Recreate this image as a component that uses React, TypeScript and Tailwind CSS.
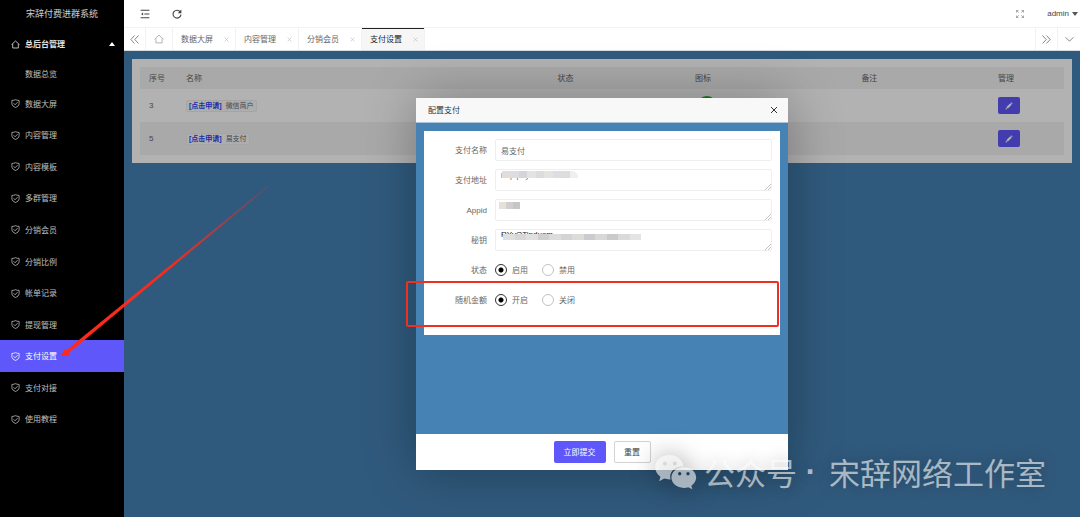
import { useState } from 'react'
import type { ReactNode } from 'react'

/* ─── Data ────────────────────────────────────────────────────────────────── */

const MENU = [
  '数据大屏', '内容管理', '内容模板', '多群管理', '分销会员', '分销比例',
  '帐单记录', '提现管理', '支付设置', '支付对接', '使用教程',
]

const TABS = ['数据大屏', '内容管理', '分销会员', '支付设置']

const ROWS = [
  { id: 3, name: '微信商户' },
  { id: 5, name: '易支付' },
]

const LATIN = "font-['Liberation_Sans','Noto_Sans_CJK_SC',sans-serif]"

/* ─── Icons ───────────────────────────────────────────────────────────────── */

function Icon({ className, children }: { className: string; children: ReactNode }) {
  return (
    <svg
      viewBox="0 0 16 16"
      className={`shrink-0 ${className}`}
      fill="none"
      stroke="currentColor"
      strokeWidth="1.4"
      aria-hidden="true"
    >
      {children}
    </svg>
  )
}

const HomeIcon = ({ className }: { className: string }) => (
  <Icon className={className}>
    <path d="M1 8.2 8 1.8l7 6.4M3 7v7.2h10V7" />
  </Icon>
)

const ShieldIcon = () => (
  <Icon className="size-[9px]">
    <path d="M8 1.2c2.2 1 4.4 1.4 6.4 1.4V8c0 3.4-2.6 5.6-6.4 7C4.2 13.6 1.6 11.4 1.6 8V2.6C3.6 2.6 5.8 2.2 8 1.2z" />
    <path d="m4.6 7.6 2.6 2.6 4.6-4.6" />
  </Icon>
)

const CloseIcon = ({ className }: { className: string }) => (
  <Icon className={className}>
    <path d="m2 2 12 12M14 2 2 14" strokeWidth="2" />
  </Icon>
)

const PencilIcon = () => (
  <svg viewBox="0 0 16 16" className="size-2" fill="currentColor" aria-hidden="true">
    <path d="m1 15 1.2-4 2.8 2.8zM3 10.200l7.600-7.600 2.800 2.800-7.600 7.600zM11.400 1.800l1.200-1.200 2.800 2.800-1.200 1.200z" />
  </svg>
)

/* ─── Sidebar ─────────────────────────────────────────────────────────────── */

function Sidebar() {
  return (
    <aside className="w-[124px] shrink-0 bg-black text-white/75">
      <h1 className="flex h-7 items-center justify-center text-[9px] text-white/80">宋辞付费进群系统</h1>
      <nav>
        <a href="#admin" className="flex h-8 items-center gap-[5px] px-[11px] font-bold text-white/90">
          <HomeIcon className="size-[9px]" />
          <span className="flex-1">总后台管理</span>
          <svg viewBox="0 0 6 4" className="mr-[-2px] h-1 w-1.5" fill="white" aria-hidden="true">
            <path d="M3 0l3 4H0z" />
          </svg>
        </a>
        <a href="#overview" className="flex h-7 items-center pl-[25px]">数据总览</a>
        <ul className="flex h-[347px] flex-col">
          {MENU.map((m) => (
            <li key={m} className="flex-1">
              <a
                href={`#${m}`}
                className={`flex h-full items-center gap-[5px] px-[11px] ${m === '支付设置' ? 'bg-[#5f57fa] text-white' : ''}`}
              >
                <ShieldIcon />
                {m}
              </a>
            </li>
          ))}
        </ul>
      </nav>
    </aside>
  )
}

/* ─── Top bar and tabs ────────────────────────────────────────────────────── */

function TopBar() {
  return (
    <header className="bg-white text-[#444]">
      <div className="flex h-[27px] items-center pl-4">
        <button aria-label="收起菜单">
          <Icon className="size-[10px]">
            <path d="M1 2h14M7 8h8M1 14h14" strokeWidth="1.8" />
            <path d="M5 5.500v5L1.800 8z" fill="currentColor" stroke="none" />
          </Icon>
        </button>
        <button aria-label="刷新" className="ml-[22px]">
          <Icon className="size-[10px]">
            <path d="M13.200 4.600A6.300 6.300 0 1 0 14.300 9" strokeWidth="1.8" />
            <path d="M15 .8V6.600H9.200z" fill="currentColor" stroke="none" />
          </Icon>
        </button>
        <button aria-label="全屏" className="ml-auto text-[#888]">
          <Icon className="size-2">
            <path d="M1 5V1h4M1 1l4.500 4.500M11 1h4v4M15 1l-4.500 4.500M15 11v4h-4M15 15l-4.500-4.500M5 15H1v-4M1 15l4.500-4.500" />
          </Icon>
        </button>
        <button className={`ml-[23px] mr-0.5 flex items-center gap-[3px] ${LATIN}`}>
          admin
          <svg viewBox="0 0 6 4" className="h-1 w-1.5" fill="#555" aria-hidden="true">
            <path d="M0 0h6L3 4z" />
          </svg>
        </button>
      </div>
      <div className="flex h-6 border-y border-t-[#f2f2f2] border-b-[#d5dbe0] text-[#666]">
        <button aria-label="向左滚动" className="flex w-[22px] items-center justify-center border-r border-[#f2f2f2]">
          <Icon className="size-[9px]">
            <path d="M8 1 1.500 8 8 15M15 1 8.500 8l6.500 7" />
          </Icon>
        </button>
        <a href="#home" aria-label="首页" className="flex w-[27px] items-center justify-center border-r border-[#f2f2f2] text-[#aaa]">
          <HomeIcon className="size-[10px]" />
        </a>
        {TABS.map((t) => (
          <div
            key={t}
            className={`flex w-[63px] items-center justify-between border-r border-[#f2f2f2] pl-2 pr-1.5 ${
              t === '支付设置' ? 'bg-[#f6f6f6] text-[#222] shadow-[inset_0_1px_0_#222]' : ''
            }`}
          >
            <a href={`#tab-${t}`}>{t}</a>
            <button aria-label={`关闭${t}`} className="text-[#bbb]">
              <CloseIcon className="size-[5px]" />
            </button>
          </div>
        ))}
        <button aria-label="向右滚动" className="ml-auto flex w-[23px] items-center justify-center border-x border-[#f2f2f2]">
          <Icon className="size-[9px]">
            <path d="M1 1l6.500 7L1 15M8 1l6.500 7L8 15" />
          </Icon>
        </button>
        <button aria-label="更多" className="flex w-[22px] items-center justify-center">
          <Icon className="size-[9px]">
            <path d="m1 4 7 7 7-7" />
          </Icon>
        </button>
      </div>
    </header>
  )
}

/* ─── Payment table ───────────────────────────────────────────────────────── */

function PaymentTable() {
  return (
    <div className="bg-white p-2 text-[#666]">
      <table className="w-full table-fixed text-left">
        <thead>
          <tr className="h-[22px] bg-[#f2f2f2]">
            <th className="w-[4%] pl-[9px] font-normal">序号</th>
            <th className="w-[40.2%] pl-[9px] font-normal">名称</th>
            <th className="w-[14.9%] pl-[9px] font-normal">状态</th>
            <th className="w-[18%] pl-[9px] font-normal">图标</th>
            <th className="w-[14.9%] pl-[9px] font-normal">备注</th>
            <th className="pl-2 font-normal">管理</th>
          </tr>
        </thead>
        <tbody>
          {ROWS.map((r) => (
            <tr key={r.id} className="h-[33px] even:bg-[#f2f2f2]">
              <td className={`pl-[9px] ${LATIN}`}>{r.id}</td>
              <td className="pl-[9px]">
                <span className={`flex h-3 w-fit items-center gap-1 rounded-xs border border-[#ececec] bg-[#fafafa] px-0.5 text-[7px] ${LATIN}`}>
                  <a href="#apply" className="font-bold text-[#2a3ef0]">[点击申请]</a>
                  {r.name}
                </span>
              </td>
              <td className="pl-[9px]">启用</td>
              <td className="pl-[11px]">
                <span className="block size-5 rounded-full bg-[#1db31d]" />
              </td>
              <td />
              <td className="pl-2">
                <button aria-label="编辑" className="flex h-[17px] w-[22px] items-center justify-center rounded-xs bg-[#5f57fa] text-white">
                  <PencilIcon />
                </button>
              </td>
            </tr>
          ))}
        </tbody>
      </table>
    </div>
  )
}

/* ─── Dialog form ─────────────────────────────────────────────────────────── */

const FIELD = 'block h-[22px] w-full resize-none rounded-xs border border-[#eee] bg-white px-[5px] outline-none'

function FormRow({ id, label, children }: { id: string; label: ReactNode; children: ReactNode }) {
  return (
    <div className="mb-2 flex h-[22px] items-center gap-2">
      <label htmlFor={id} className="w-[55px] text-right">{label}</label>
      <div className="relative flex-1">{children}</div>
    </div>
  )
}

const Grip = () => (
  <svg viewBox="0 0 6 6" className="pointer-events-none absolute bottom-px right-px size-1.5" stroke="#999" strokeWidth=".6" aria-hidden="true">
    <path d="M0 6 6 0M3 6l3-3" />
  </svg>
)

function Mosaic({ className, colors }: { className: string; colors: string[] }) {
  return (
    <div className={`absolute flex overflow-hidden ${className}`}>
      {colors.map((c, i) => (
        <span key={i} className="h-full flex-1" style={{ backgroundColor: c }} />
      ))}
    </div>
  )
}

function RadioPair({ id, options }: { id: string; options: string[] }) {
  const [value, setValue] = useState(options[0])
  return (
    <div className="flex gap-[14px]">
      {options.map((o, i) => (
        <label key={o} className="flex items-center gap-[5px]">
          <input
            id={i === 0 ? id : undefined}
            type="radio"
            name={id}
            checked={value === o}
            onChange={() => setValue(o)}
            className="size-3 appearance-none rounded-full border border-[#c2c2c2] bg-white checked:border-[#333] checked:bg-[radial-gradient(circle,#000_2px,#fff_3px)]"
          />
          {o}
        </label>
      ))}
    </div>
  )
}

function PayDialog() {
  return (
    <div role="dialog" aria-label="配置支付" className="relative flex w-[372px] flex-col text-[#666] shadow-[1px_1px_50px_rgba(0,0,0,0.3)]">
      <div className="flex h-6 items-center justify-between bg-[#f8f8f8] pl-3 pr-[10px] text-[#333]">
        <h2>配置支付</h2>
        <button aria-label="关闭">
          <CloseIcon className="size-2" />
        </button>
      </div>
      <div className="min-h-[312px] border-t border-[#a9c4da] bg-[#4682b4] p-2">
        <form id="pay-form" className="bg-white px-2 pb-4 pt-2">
          <FormRow id="name" label="支付名称">
            <input id="name" className={FIELD} defaultValue="易支付" />
          </FormRow>
          <FormRow id="url" label="支付地址">
            <textarea id="url" className={`${FIELD} ${LATIN}`} defaultValue="http:pay." />
            <Mosaic
              className="left-[7px] top-[2px] h-[7px] w-[76px] rounded-tr-md"
              colors={['#e2dcdc', '#dcdde0', '#d3d5d8', '#e5e3e2', '#dcdcdc', '#e3e3e1', '#d9dfe2', '#dedcdf', '#efefef']}
            />
            <Grip />
          </FormRow>
          <FormRow id="appid" label={<span className={LATIN}>Appid</span>}>
            <textarea id="appid" className={FIELD} />
            <Mosaic className="left-1 top-[3px] h-[7px] w-[21px]" colors={['#e6e0db', '#cfcfd1', '#c4c6c9']} />
            <Grip />
          </FormRow>
          <FormRow id="secret" label="秘钥">
            <textarea id="secret" className={`${FIELD} ${LATIN} leading-[10px] text-[#222]`} defaultValue="RYyOTinduom" />
            <Mosaic
              className="left-2 top-[5px] h-1.5 w-[138px]"
              colors={['#dfdfdf', '#d7d7d9', '#e1e0df', '#cfcfd1', '#dcdcdc', '#d2d4d6', '#dedcda', '#cbcccf', '#d8d8d8', '#c9cacc', '#dadada', '#e4e4e4']}
            />
            <Grip />
          </FormRow>
          <FormRow id="status" label="状态">
            <RadioPair id="status" options={['启用', '禁用']} />
          </FormRow>
          <FormRow id="random" label="随机金额">
            <RadioPair id="random" options={['开启', '关闭']} />
          </FormRow>
        </form>
      </div>
      <div className="flex h-9 items-center justify-center gap-2 bg-white">
        <button type="submit" form="pay-form" className="h-[22px] w-[52px] rounded-xs bg-[#5f57fa] text-white">立即提交</button>
        <button type="reset" form="pay-form" className="h-[22px] w-[37px] rounded-xs border border-[#d2d2d2] text-[#444]">重置</button>
      </div>
      {/* highlight around the random amount row */}
      <div className="pointer-events-none absolute -left-[10px] right-[9px] top-[183px] h-[46px] rounded-xs border-2 border-[#f0301f]" />
    </div>
  )
}

/* ─── Annotations ─────────────────────────────────────────────────────────── */

const Arrow = () => (
  <svg viewBox="0 0 210 175" className="pointer-events-none absolute left-[60px] top-[184px] h-[175px] w-[210px]" aria-hidden="true">
    <defs>
      <linearGradient id="fade" gradientUnits="userSpaceOnUse" x1="1" y1="172" x2="210" y2="1">
        <stop offset=".5" stopColor="#fb2a1c" />
        <stop offset="1" stopColor="#fb2a1c" stopOpacity=".15" />
      </linearGradient>
    </defs>
    <path d="M1 172 4.500 165l1.500 1.600L208 1.500l.8 1L8.300 169.600l1 2z" fill="url(#fade)" />
  </svg>
)

function Watermark() {
  return (
    <div className="pointer-events-none absolute bottom-[22px] right-[34px] flex items-center text-[31px] leading-[46px] text-white/60 [text-shadow:0_0_16px_rgba(0,0,0,0.3)]">
      <svg viewBox="0 0 42 34" className="mr-[7px] h-[34px] w-[42px] overflow-visible drop-shadow-[0_0_12px_rgba(0,0,0,0.6)]" fill="currentColor" fillRule="evenodd" aria-hidden="true">
        <path d="M14.500 0C6.500 0 .2 5.400.2 12.200c0 3.900 2 7.200 5.200 9.500L4.200 26.200l5-2.600c1.700.5 3.500.8 5.400.8h.9C13.600 17 20 11 28.600 11.200 27.300 4.600 21.400 0 14.500 0zM9.800 6.400a2 2 0 1 1 0 4 2 2 0 0 1 0-4zm10 0a2 2 0 1 1 0 4 2 2 0 0 1 0-4z" />
        <path d="M28.800 12.300c-7 0-12.400 4.600-12.400 10.300s5.400 10.300 12.400 10.300c1.600 0 3.100-.3 4.500-.7l4.100 2-1.100-3.500c3-2 4.900-4.900 4.900-8.100 0-5.700-5.400-10.300-12.400-10.300zM24.700 17a1.700 1.700 0 1 1 0 3.400 1.700 1.700 0 0 1 0-3.400zm8.300 0a1.700 1.700 0 1 1 0 3.400 1.700 1.700 0 0 1 0-3.400z" />
      </svg>
      公众号
      <span className={`w-8 pr-1 text-center font-bold ${LATIN}`}>·</span>
      宋辞网络工作室
    </div>
  )
}

/* ─── App ─────────────────────────────────────────────────────────────────── */

export default function App() {
  return (
    <div className="relative flex min-h-screen overflow-hidden font-['Noto_Sans_CJK_SC',sans-serif] text-[8px] leading-3">
      <Sidebar />
      <div className="flex min-w-0 flex-1 flex-col">
        <TopBar />
        <main className="relative flex-1 bg-[#4682b4] px-2 pt-2">
          <PaymentTable />
          <div className="absolute inset-0 flex items-center justify-center bg-black/30">
            <PayDialog />
          </div>
        </main>
      </div>
      <Arrow />
      <Watermark />
    </div>
  )
}
